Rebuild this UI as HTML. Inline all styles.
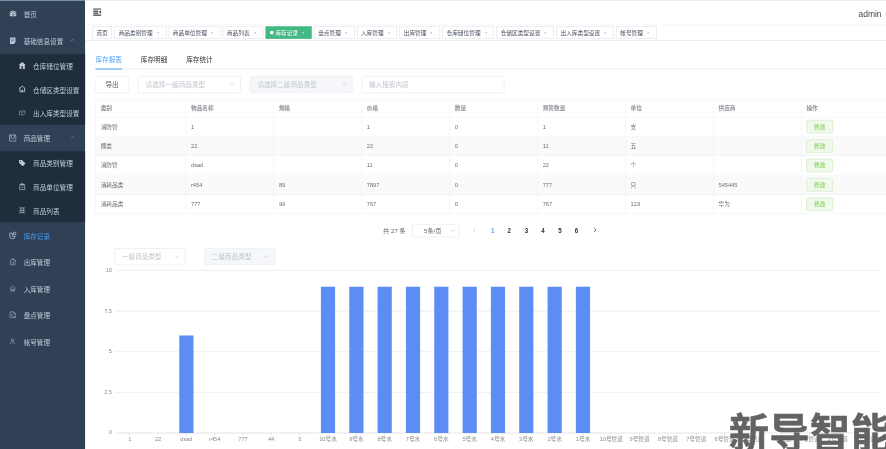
<!DOCTYPE html>
<html lang="zh-CN">
<head>
<meta charset="utf-8">
<title>库存记录</title>
<style>
*{box-sizing:border-box;}
html,body{margin:0;padding:0;width:886px;height:449px;overflow:hidden;background:#fff;}
body{font-family:"Liberation Sans","Noto Sans CJK SC",sans-serif;color:#303133;-webkit-font-smoothing:antialiased;}
#stage{filter:blur(0.7px);position:absolute;left:0;top:0;width:1920px;height:960px;transform:scale(0.4727);transform-origin:0 0;overflow:hidden;background:#fff;}
#topstrip{position:absolute;left:0;top:0;width:1920px;height:2px;background:rgba(215,216,218,.42);z-index:50;}
/* ---------- sidebar ---------- */
#side{position:absolute;left:0;top:2px;width:180px;height:960px;background:#304156;font-size:14px;color:#bfcbd9;}
#side .it{position:relative;height:56px;line-height:56px;padding-left:20px;white-space:nowrap;}
#side .sub{background:#1f2d3d;}
#side .sub .it{height:50px;line-height:50px;padding-left:40px;}
#side .ic{display:inline-block;width:14px;height:14px;margin-right:16px;vertical-align:-2px;}
#side .ic svg{display:block;width:16px;height:16px;margin:-1px;}
#side .arr{position:absolute;right:20px;top:50%;width:12px;height:12px;margin-top:-7px;}
#side .arr svg{display:block;}
#side .act{color:#4798f0;}
#side b{font-weight:normal;position:relative;top:2px;}
/* ---------- navbar ---------- */
#nav{position:absolute;left:180px;top:2px;width:1740px;height:50px;background:#fff;box-shadow:0 1px 4px rgba(0,21,41,.05);}
#ham{position:absolute;left:14.5px;top:12.5px;width:21px;height:21px;}
#user{position:absolute;left:1636px;top:0;height:50px;line-height:58px;font-size:18px;color:#4a4a4a;}
/* ---------- tags ---------- */
#tags{position:absolute;left:180px;top:52px;width:1740px;height:34px;background:#fff;border-bottom:1px solid #d8dce5;box-shadow:0 1px 3px 0 rgba(0,0,0,.12),0 0 3px 0 rgba(0,0,0,.04);white-space:nowrap;font-size:0;}
#tags .tg{display:inline-block;height:26px;line-height:24px;border:1px solid #d8dce5;color:#495060;background:#fff;padding:0 8px;font-size:12px;margin-left:5px;margin-top:4px;vertical-align:top;}
#tags .tg:first-child{margin-left:15px;}
#tags .tg.on{background:#42b983;color:#fff;border-color:#42b983;}
#tags .tg.on:before{content:"";display:inline-block;width:8px;height:8px;border-radius:50%;background:#fff;margin-right:4px;position:relative;top:0px;}
#tags .x{display:inline-block;width:16px;height:16px;margin-left:3.5px;text-align:center;line-height:16px;font-size:7px;vertical-align:1px;color:#8d939f;}
#tags .tg.on .x{color:#fff;}
/* ---------- main ---------- */
#main{position:absolute;left:180px;top:86px;width:1740px;height:874px;}
#tabs{position:absolute;left:22px;top:20px;width:1703px;height:41px;border-bottom:2px solid #e8ebf0;font-size:14px;line-height:40px;color:#303133;}
#tabs span{position:absolute;top:0;white-space:nowrap;}
#tabs .bar{position:absolute;left:0;bottom:-2px;width:56px;height:2px;background:#409EFF;}
.btn{position:absolute;border:1px solid #DCDFE6;border-radius:4px;background:#fff;color:#606266;text-align:center;}
.inp{position:absolute;border:1px solid #DCDFE6;border-radius:4px;background:#fff;color:#C0C4CC;font-size:14px;padding-left:15px;white-space:nowrap;}
.inp.dis{background:#F5F7FA;border-color:#E4E7ED;}
.inp i{position:absolute;right:11px;top:50%;width:12px;height:12px;margin-top:-6px;}
.inp i svg{display:block;}
/* table */
#tbl{position:absolute;left:20px;top:125px;width:1703px;height:243px;border-top:1px solid #EBEEF5;border-left:1px solid #EBEEF5;font-size:12px;color:#6c6e73;}
#tbl .r{position:absolute;left:0;height:41px;border-bottom:1px solid #EBEEF5;}
#tbl .r.h{height:36px;color:#909399;font-weight:bold;}
#tbl .r.s{background:#FAFAFA;}
#tbl .c{position:absolute;top:0;height:100%;border-right:1px solid #EBEEF5;padding-left:10px;line-height:40px;white-space:nowrap;}
#tbl .r.h .c{line-height:35px;}
.mod{display:inline-block;width:56px;height:28px;line-height:26px;border:1px solid #c2e7b0;border-radius:3px;background:#f0f9eb;color:#74c94a;text-align:center;font-size:12px;vertical-align:middle;margin-top:-2px;}
/* pagination */
#pg{position:absolute;left:0;top:387.5px;width:1740px;height:28px;font-size:13px;color:#606266;line-height:28px;}
#pg span{position:absolute;top:0;white-space:nowrap;}
#pg .n{width:30px;text-align:center;font-weight:bold;color:#303133;transform:scaleY(1.18);transform-origin:50% 55%;}
#pg .n.on{color:#5aa9fa;}
/* chart */
#chart{position:absolute;left:0;top:0;}
#wm{position:absolute;left:1542px;top:858px;font-family:"Noto Sans CJK SC",sans-serif;font-weight:700;font-size:82px;line-height:100px;color:#585858;opacity:.93;white-space:nowrap;letter-spacing:1.4px;z-index:40;transform:scale(1.03,1.06);transform-origin:0 0;-webkit-text-stroke:1.2px #585858;}
</style>
</head>
<body>
<div id="stage">
<div id="topstrip"></div><div style="position:absolute;left:0;top:0;width:180px;height:2.200px;background:#788ba4;z-index:51"></div>

<!-- SIDEBAR -->
<div id="side">
  <div class="it"><span class="ic"><svg viewBox="0 0 128 100" style="width:15px;height:15px;margin:-2.500px -.5px 0"><path fill="#bfcbd9" fill-rule="evenodd" d="M27.429 63.638c0-2.508-.893-4.65-2.679-6.424-1.786-1.775-3.94-2.662-6.464-2.662-2.524 0-4.679.887-6.465 2.662-1.785 1.774-2.678 3.916-2.678 6.424 0 2.508.893 4.65 2.678 6.424 1.786 1.775 3.94 2.662 6.465 2.662 2.524 0 4.678-.887 6.464-2.662 1.786-1.775 2.679-3.916 2.679-6.424zm13.714-31.801c0-2.508-.893-4.65-2.679-6.424-1.785-1.775-3.94-2.662-6.464-2.662-2.524 0-4.679.887-6.464 2.662-1.786 1.774-2.679 3.916-2.679 6.424 0 2.508.893 4.65 2.679 6.424 1.785 1.774 3.94 2.662 6.464 2.662 2.524 0 4.679-.888 6.464-2.662 1.786-1.775 2.679-3.916 2.679-6.424zM71.714 65.98l7.215-27.116c.285-1.23.107-2.378-.536-3.443-.643-1.064-1.56-1.762-2.75-2.094-1.19-.33-2.333-.177-3.429.462-1.095.639-1.81 1.573-2.143 2.804l-7.214 27.116c-2.857.237-5.405 1.266-7.643 3.088-2.238 1.822-3.738 4.152-4.5 6.992-.952 3.644-.476 7.098 1.429 10.364 1.905 3.265 4.69 5.37 8.357 6.317 3.667.947 7.143.474 10.429-1.420 3.285-1.892 5.404-4.66 6.357-8.305.762-2.84.619-5.607-.429-8.305-1.047-2.697-2.762-4.85-5.143-6.46zm47.143-2.342c0-2.508-.893-4.65-2.678-6.424-1.786-1.775-3.94-2.662-6.465-2.662-2.524 0-4.678.887-6.464 2.662-1.786 1.774-2.679 3.916-2.679 6.424 0 2.508.893 4.65 2.679 6.424 1.786 1.775 3.94 2.662 6.464 2.662 2.524 0 4.679-.887 6.465-2.662 1.785-1.775 2.678-3.916 2.678-6.424zm-45.714-45.43c0-2.509-.893-4.65-2.679-6.425C68.680 10.010 66.524 9.122 64 9.122c-2.524 0-4.679.887-6.464 2.661-1.786 1.775-2.679 3.916-2.679 6.425 0 2.508.893 4.65 2.679 6.424 1.785 1.774 3.94 2.662 6.464 2.662 2.524 0 4.679-.888 6.464-2.662 1.786-1.775 2.679-3.916 2.679-6.424zm32 13.629c0-2.508-.893-4.65-2.679-6.424-1.785-1.775-3.94-2.662-6.464-2.662-2.524 0-4.679.887-6.464 2.662-1.786 1.774-2.679 3.916-2.679 6.424 0 2.508.893 4.65 2.679 6.424 1.785 1.774 3.94 2.662 6.464 2.662 2.524 0 4.679-.888 6.464-2.662 1.786-1.775 2.679-3.916 2.679-6.424zM128 63.638c0 12.351-3.357 23.78-10.071 34.286-.905 1.372-2.190 2.058-3.858 2.058H13.930c-1.667 0-2.953-.686-3.858-2.058C3.357 87.465 0 76.037 0 63.638c0-8.613 1.690-16.847 5.071-24.703C8.452 31.080 13 24.312 18.714 18.634c5.715-5.680 12.524-10.199 20.429-13.559C47.048 1.715 55.333.035 64 .035c8.667 0 16.952 1.680 24.857 5.040 7.905 3.360 14.714 7.880 20.429 13.559 5.714 5.678 10.262 12.446 13.643 20.301 3.380 7.856 5.071 16.090 5.071 24.703z"/></svg></span><b>首页</b></div>
  <div class="it"><span class="ic"><svg viewBox="0 0 14 14"><path fill="#bfcbd9" d="M2 1h10v8.500L9 13H2z"/><path stroke="#304156" stroke-width=".9" d="M4 4h6M4 6.500h6M4 9h3"/></svg></span><b>基础信息设置</b><span class="arr"><svg width="12" height="12" viewBox="0 0 12 12"><path d="M2 8l4-4 4 4" fill="none" stroke="#8391a3" stroke-width="1.200"/></svg></span></div>
  <div class="sub">
    <div class="it"><span class="ic"><svg viewBox="0 0 14 14"><path fill="#bfcbd9" d="M7 .3L.8 5.400h1.400V13.300h9.600V5.400h1.400z"/><path fill="#1f2d3d" d="M5.600 8.200h2.800v5.100H5.600z"/></svg></span><b>仓库储位管理</b></div>
    <div class="it"><span class="ic"><svg viewBox="0 0 14 14" style="margin-top:-2px"><path fill="none" stroke="#bfcbd9" stroke-width="1.600" d="M1 6.800L7 1.800l6 5M2.800 6v6.500h8.400V6"/><path fill="#bfcbd9" d="M5.600 8.500h2.800v4H5.600z"/></svg></span><b>仓储区类型设置</b></div>
    <div class="it"><span class="ic"><svg viewBox="0 0 14 14" opacity=".8"><path fill="none" stroke="#bfcbd9" stroke-width="1.100" d="M2 3.500h10v4.500L9.500 10.500H2z"/><path stroke="#bfcbd9" stroke-width="1" d="M6 5.500v3M8 5.500v2"/></svg></span><b>出入库类型设置</b></div>
  </div>
  <div class="it"><span class="ic"><svg viewBox="0 0 14 14" style="margin-top:-1.500px"><path fill="none" stroke="#bfcbd9" stroke-width="1.300" d="M1.200 1.200h11.600v11.600H1.200zM4 1.500v3.500c0 4 6 4 6 0V1.500"/></svg></span><b>商品管理</b><span class="arr"><svg width="12" height="12" viewBox="0 0 12 12"><path d="M2 8l4-4 4 4" fill="none" stroke="#8391a3" stroke-width="1.200"/></svg></span></div>
  <div class="sub">
    <div class="it"><span class="ic"><svg viewBox="0 0 14 14"><path fill="#bfcbd9" d="M1 1.500h5.500l6.500 6.500-5 5-7-6.500z"/><circle cx="3.800" cy="4.200" r="1" fill="#1f2d3d"/></svg></span><b>商品类别管理</b></div>
    <div class="it"><span class="ic"><svg viewBox="0 0 14 14"><path fill="none" stroke="#bfcbd9" stroke-width="1.200" d="M2.500 3h9v9.500h-9zM5 1.500h4V4H5zM5 8l1.500 1.500L9.500 6.500"/></svg></span><b>商品单位管理</b></div>
    <div class="it"><span class="ic"><svg viewBox="0 0 14 14"><path fill="none" stroke="#bfcbd9" stroke-width="1.100" d="M1.500 2.500h11M1.500 7h11M1.500 11.500h11M4.500 2v10M9 2v10"/></svg></span><b>商品列表</b></div>
  </div>
  <div class="it act"><span class="ic"><svg viewBox="0 0 14 14"><path fill="none" stroke="#bfcbd9" stroke-width="1.300" d="M6 2.800H1.500V8a5 5 0 0 0 10 .8H6zM8.200 1h4.600v4.800H8.200z"/></svg></span><b>库存记录</b></div>
  <div class="it"><span class="ic"><svg viewBox="0 0 14 14" opacity=".85"><path fill="none" stroke="#bfcbd9" stroke-width="1.100" d="M1.500 6.500L7 2l5.500 4.500M2.800 6v6.500h8.400V6M4.500 2.800L7 .8l5.500 4M5.800 9l2.400-1.400v3.600"/></svg></span><b>出库管理</b></div>
  <div class="it"><span class="ic"><svg viewBox="0 0 14 14" opacity=".8"><path fill="none" stroke="#bfcbd9" stroke-width="1.100" d="M1.500 7L7 2.500 12.500 7M3.500 6.500V12h7V6.500M5.500 12V9h3v3"/></svg></span><b>入库管理</b></div>
  <div class="it"><span class="ic"><svg viewBox="0 0 14 14" opacity=".8"><path fill="none" stroke="#bfcbd9" stroke-width="1.100" d="M2 1.500h7L12.500 5v7.500H2zM9 1.500V5h3.500M5 5v4h4M7.500 10.500l1.500 1.500 2.500-3"/></svg></span><b>盘点管理</b></div>
  <div class="it"><span class="ic"><svg viewBox="0 0 14 14" opacity=".85"><circle cx="6.500" cy="4.800" r="2.300" fill="none" stroke="#bfcbd9" stroke-width="1.100"/><path fill="none" stroke="#bfcbd9" stroke-width="1.100" d="M2.500 12c.6-2.600 2-4 4-4s3.400 1.400 4 4"/></svg></span><b>帐号管理</b></div>
</div>

<!-- NAVBAR -->
<div id="nav">
  <svg id="ham" viewBox="0 0 1024 1024"><g transform="rotate(180 512 512)" fill="#111" stroke="#111" stroke-width="22"><path d="M408 442h480c4.400 0 8-3.600 8-8v-56c0-4.400-3.600-8-8-8H408c-4.400 0-8 3.600-8 8v56c0 4.400 3.600 8 8 8zm-8 204c0 4.400 3.600 8 8 8h480c4.400 0 8-3.600 8-8v-56c0-4.400-3.600-8-8-8H408c-4.400 0-8 3.600-8 8v56zm504-486H120c-4.400 0-8 3.600-8 8v56c0 4.400 3.600 8 8 8h784c4.400 0 8-3.600 8-8v-56c0-4.400-3.600-8-8-8zm0 632H120c-4.400 0-8 3.600-8 8v56c0 4.400 3.600 8 8 8h784c4.400 0 8-3.600 8-8v-56c0-4.400-3.600-8-8-8zM142.400 642.100L298.700 519a8.840 8.840 0 0 0 0-13.900L142.400 381.900c-5.800-4.600-14.400-.5-14.400 6.900v246.300a8.900 8.900 0 0 0 14.400 7z"/></g></svg>
  <div id="user">admin</div>
</div>

<!-- TAGS -->
<div id="tags"><span class="tg">首页</span><span class="tg">商品类别管理<span class="x">✕</span></span><span class="tg">商品单位管理<span class="x">✕</span></span><span class="tg">商品列表<span class="x">✕</span></span><span class="tg on">库存记录<span class="x">✕</span></span><span class="tg">盘点管理<span class="x">✕</span></span><span class="tg">入库管理<span class="x">✕</span></span><span class="tg">出库管理<span class="x">✕</span></span><span class="tg">仓库储位管理<span class="x">✕</span></span><span class="tg">仓储区类型设置<span class="x">✕</span></span><span class="tg">出入库类型设置<span class="x">✕</span></span><span class="tg">帐号管理<span class="x">✕</span></span></div>

<!-- MAIN -->
<div id="main">
  <div id="tabs">
    <span style="left:0;color:#4fa5fb">库存报表</span>
    <span style="left:96px">库存明细</span>
    <span style="left:192px">库存统计</span>
    <div class="bar"></div>
  </div>

  <div class="btn" style="left:22px;top:75px;width:70px;height:36px;line-height:34px;font-size:14px;">导出</div>
  <div class="inp" style="left:112px;top:75px;width:217px;height:36px;line-height:34px;">请选择一级商品类型<i><svg width="12" height="12" viewBox="0 0 12 12"><path d="M2 4l4 4 4-4" fill="none" stroke="#C0C4CC" stroke-width="1.200"/></svg></i></div>
  <div class="inp dis" style="left:348.5px;top:75px;width:217px;height:36px;line-height:34px;">请选择二级商品类型<i><svg width="12" height="12" viewBox="0 0 12 12"><path d="M2 4l4 4 4-4" fill="none" stroke="#C0C4CC" stroke-width="1.200"/></svg></i></div>
  <div class="inp" style="left:584.5px;top:75px;width:302px;height:36px;line-height:34px;">输入搜索内容</div>

  <div id="tbl" style="left:22px;width:1703px">
    <div class="r h" style="top:0;width:1703px"><div class="c" style="left:0px;width:191px">类别</div><div class="c" style="left:191px;width:186px">物品名称</div><div class="c" style="left:377px;width:186px">规格</div><div class="c" style="left:563px;width:186px">价格</div><div class="c" style="left:749px;width:186px">数量</div><div class="c" style="left:935px;width:186px">预警数量</div><div class="c" style="left:1121px;width:186px">单位</div><div class="c" style="left:1307px;width:186px">供应商</div><div class="c" style="left:1493px;width:209px">操作</div></div>
    <div class="r" style="top:36px;width:1703px"><div class="c" style="left:0px;width:191px">消防管</div><div class="c" style="left:191px;width:186px">1</div><div class="c" style="left:377px;width:186px"></div><div class="c" style="left:563px;width:186px">1</div><div class="c" style="left:749px;width:186px">0</div><div class="c" style="left:935px;width:186px">1</div><div class="c" style="left:1121px;width:186px">支</div><div class="c" style="left:1307px;width:186px"></div><div class="c" style="left:1493px;width:209px"><span class="mod">修改</span></div></div>
    <div class="r s" style="top:77px;width:1703px"><div class="c" style="left:0px;width:191px">棚类</div><div class="c" style="left:191px;width:186px">22</div><div class="c" style="left:377px;width:186px"></div><div class="c" style="left:563px;width:186px">22</div><div class="c" style="left:749px;width:186px">0</div><div class="c" style="left:935px;width:186px">11</div><div class="c" style="left:1121px;width:186px">五</div><div class="c" style="left:1307px;width:186px"></div><div class="c" style="left:1493px;width:209px"><span class="mod">修改</span></div></div>
    <div class="r" style="top:118px;width:1703px"><div class="c" style="left:0px;width:191px">消防管</div><div class="c" style="left:191px;width:186px">dsad</div><div class="c" style="left:377px;width:186px"></div><div class="c" style="left:563px;width:186px">11</div><div class="c" style="left:749px;width:186px">0</div><div class="c" style="left:935px;width:186px">22</div><div class="c" style="left:1121px;width:186px">个</div><div class="c" style="left:1307px;width:186px"></div><div class="c" style="left:1493px;width:209px"><span class="mod">修改</span></div></div>
    <div class="r s" style="top:159px;width:1703px"><div class="c" style="left:0px;width:191px">消耗品类</div><div class="c" style="left:191px;width:186px">r454</div><div class="c" style="left:377px;width:186px">89</div><div class="c" style="left:563px;width:186px">7897</div><div class="c" style="left:749px;width:186px">0</div><div class="c" style="left:935px;width:186px">777</div><div class="c" style="left:1121px;width:186px">只</div><div class="c" style="left:1307px;width:186px">545445</div><div class="c" style="left:1493px;width:209px"><span class="mod">修改</span></div></div>
    <div class="r" style="top:200px;width:1703px"><div class="c" style="left:0px;width:191px">消耗品类</div><div class="c" style="left:191px;width:186px">777</div><div class="c" style="left:377px;width:186px">99</div><div class="c" style="left:563px;width:186px">767</div><div class="c" style="left:749px;width:186px">0</div><div class="c" style="left:935px;width:186px">767</div><div class="c" style="left:1121px;width:186px">123</div><div class="c" style="left:1307px;width:186px">华为</div><div class="c" style="left:1493px;width:209px"><span class="mod">修改</span></div></div>
    </div>

  <div id="pg">
    <span style="left:630.5px">共 27 条</span>
    <div class="inp" style="left:692px;top:0;width:100px;height:28px;line-height:26px;font-size:13px;color:#606266;padding-left:12px;text-align:center;padding-right:25px;border-radius:3px;">5条/页<i style="right:7px"><svg width="12" height="12" viewBox="0 0 12 12"><path d="M2 4l4 4 4-4" fill="none" stroke="#C0C4CC" stroke-width="1.200"/></svg></i></div>
    <span class="n" style="left:809px;color:#C0C4CC;font-weight:normal"><svg width="12" height="12" viewBox="0 0 12 12" style="vertical-align:-1px"><path d="M7.500 2L3.500 6l4 4" fill="none" stroke="#C0C4CC" stroke-width="1.300"/></svg></span>
    <span class="n on" style="left:847.5px">1</span>
    <span class="n" style="left:882.5px">2</span>
    <span class="n" style="left:918.5px">3</span>
    <span class="n" style="left:953.5px">4</span>
    <span class="n" style="left:989.5px">5</span>
    <span class="n" style="left:1024.5px">6</span>
    <span class="n" style="left:1062.5px"><svg width="12" height="12" viewBox="0 0 12 12" style="vertical-align:-1px"><path d="M4.500 2l4 4-4 4" fill="none" stroke="#303133" stroke-width="1.300"/></svg></span>
  </div>

  <div class="inp" style="left:62px;top:439px;width:150px;height:36px;line-height:34px;">一级商品类型<i><svg width="12" height="12" viewBox="0 0 12 12"><path d="M2 4l4 4 4-4" fill="none" stroke="#C0C4CC" stroke-width="1.200"/></svg></i></div>
  <div class="inp dis" style="left:252px;top:439px;width:150px;height:36px;line-height:34px;">二级商品类型<i><svg width="12" height="12" viewBox="0 0 12 12"><path d="M2 4l4 4 4-4" fill="none" stroke="#C0C4CC" stroke-width="1.200"/></svg></i></div>
</div>

<!-- CHART (stage coordinates) -->
<svg id="chart" width="1920" height="960" viewBox="0 0 1920 960" font-family='"Liberation Sans","Noto Sans CJK SC",sans-serif' font-size="12">
<g>
<line x1="244.5" y1="916.0" x2="1862.5" y2="916.0" stroke="#c8c8c8" stroke-width="1"/>
<text x="237" y="919.0" text-anchor="end" fill="#8c8c8c">0</text>
<line x1="244.5" y1="830.0" x2="1862.5" y2="830.0" stroke="#dcdcdc" stroke-width="1"/>
<text x="237" y="833.0" text-anchor="end" fill="#8c8c8c">2.5</text>
<line x1="244.5" y1="744.1" x2="1862.5" y2="744.1" stroke="#dcdcdc" stroke-width="1"/>
<text x="237" y="747.1" text-anchor="end" fill="#8c8c8c">5</text>
<line x1="244.5" y1="658.2" x2="1862.5" y2="658.2" stroke="#dcdcdc" stroke-width="1"/>
<text x="237" y="661.2" text-anchor="end" fill="#8c8c8c">7.5</text>
<line x1="244.5" y1="572.2" x2="1862.5" y2="572.2" stroke="#dcdcdc" stroke-width="1"/>
<text x="237" y="575.2" text-anchor="end" fill="#8c8c8c">10</text>
<line x1="274.5" y1="916.0" x2="274.5" y2="920.0" stroke="#c8c8c8" stroke-width="1"/>
<text x="274.5" y="932.5" text-anchor="middle" fill="#8c8c8c">1</text>
<line x1="334.4" y1="916.0" x2="334.4" y2="920.0" stroke="#c8c8c8" stroke-width="1"/>
<text x="334.4" y="932.5" text-anchor="middle" fill="#8c8c8c">22</text>
<rect x="379.3" y="709.7" width="30.0" height="206.3" fill="#5B8DF4"/>
<line x1="394.3" y1="916.0" x2="394.3" y2="920.0" stroke="#c8c8c8" stroke-width="1"/>
<text x="394.3" y="932.5" text-anchor="middle" fill="#8c8c8c">dsad</text>
<line x1="454.2" y1="916.0" x2="454.2" y2="920.0" stroke="#c8c8c8" stroke-width="1"/>
<text x="454.2" y="932.5" text-anchor="middle" fill="#8c8c8c">r454</text>
<line x1="514.2" y1="916.0" x2="514.2" y2="920.0" stroke="#c8c8c8" stroke-width="1"/>
<text x="514.2" y="932.5" text-anchor="middle" fill="#8c8c8c">777</text>
<line x1="574.1" y1="916.0" x2="574.1" y2="920.0" stroke="#c8c8c8" stroke-width="1"/>
<text x="574.1" y="932.5" text-anchor="middle" fill="#8c8c8c">44</text>
<line x1="634.0" y1="916.0" x2="634.0" y2="920.0" stroke="#c8c8c8" stroke-width="1"/>
<text x="634.0" y="932.5" text-anchor="middle" fill="#8c8c8c">3</text>
<rect x="678.9" y="606.6" width="30.0" height="309.4" fill="#5B8DF4"/>
<line x1="693.9" y1="916.0" x2="693.9" y2="920.0" stroke="#c8c8c8" stroke-width="1"/>
<text x="693.9" y="932.5" text-anchor="middle" fill="#8c8c8c">10号水</text>
<rect x="738.9" y="606.6" width="30.0" height="309.4" fill="#5B8DF4"/>
<line x1="753.9" y1="916.0" x2="753.9" y2="920.0" stroke="#c8c8c8" stroke-width="1"/>
<text x="753.9" y="932.5" text-anchor="middle" fill="#8c8c8c">9号水</text>
<rect x="798.8" y="606.6" width="30.0" height="309.4" fill="#5B8DF4"/>
<line x1="813.8" y1="916.0" x2="813.8" y2="920.0" stroke="#c8c8c8" stroke-width="1"/>
<text x="813.8" y="932.5" text-anchor="middle" fill="#8c8c8c">8号水</text>
<rect x="858.7" y="606.6" width="30.0" height="309.4" fill="#5B8DF4"/>
<line x1="873.7" y1="916.0" x2="873.7" y2="920.0" stroke="#c8c8c8" stroke-width="1"/>
<text x="873.7" y="932.5" text-anchor="middle" fill="#8c8c8c">7号水</text>
<rect x="918.6" y="606.6" width="30.0" height="309.4" fill="#5B8DF4"/>
<line x1="933.6" y1="916.0" x2="933.6" y2="920.0" stroke="#c8c8c8" stroke-width="1"/>
<text x="933.6" y="932.5" text-anchor="middle" fill="#8c8c8c">6号水</text>
<rect x="978.6" y="606.6" width="30.0" height="309.4" fill="#5B8DF4"/>
<line x1="993.6" y1="916.0" x2="993.6" y2="920.0" stroke="#c8c8c8" stroke-width="1"/>
<text x="993.6" y="932.5" text-anchor="middle" fill="#8c8c8c">5号水</text>
<rect x="1038.5" y="606.6" width="30.0" height="309.4" fill="#5B8DF4"/>
<line x1="1053.5" y1="916.0" x2="1053.5" y2="920.0" stroke="#c8c8c8" stroke-width="1"/>
<text x="1053.5" y="932.5" text-anchor="middle" fill="#8c8c8c">4号水</text>
<rect x="1098.4" y="606.6" width="30.0" height="309.4" fill="#5B8DF4"/>
<line x1="1113.4" y1="916.0" x2="1113.4" y2="920.0" stroke="#c8c8c8" stroke-width="1"/>
<text x="1113.4" y="932.5" text-anchor="middle" fill="#8c8c8c">3号水</text>
<rect x="1158.4" y="606.6" width="30.0" height="309.4" fill="#5B8DF4"/>
<line x1="1173.4" y1="916.0" x2="1173.4" y2="920.0" stroke="#c8c8c8" stroke-width="1"/>
<text x="1173.4" y="932.5" text-anchor="middle" fill="#8c8c8c">2号水</text>
<rect x="1218.3" y="606.6" width="30.0" height="309.4" fill="#5B8DF4"/>
<line x1="1233.3" y1="916.0" x2="1233.3" y2="920.0" stroke="#c8c8c8" stroke-width="1"/>
<text x="1233.3" y="932.5" text-anchor="middle" fill="#8c8c8c">1号水</text>
<line x1="1293.2" y1="916.0" x2="1293.2" y2="920.0" stroke="#c8c8c8" stroke-width="1"/>
<text x="1293.2" y="932.5" text-anchor="middle" fill="#8c8c8c">10号管道</text>
<line x1="1353.1" y1="916.0" x2="1353.1" y2="920.0" stroke="#c8c8c8" stroke-width="1"/>
<text x="1353.1" y="932.5" text-anchor="middle" fill="#8c8c8c">9号管道</text>
<line x1="1413.1" y1="916.0" x2="1413.1" y2="920.0" stroke="#c8c8c8" stroke-width="1"/>
<text x="1413.1" y="932.5" text-anchor="middle" fill="#8c8c8c">8号管道</text>
<line x1="1473.0" y1="916.0" x2="1473.0" y2="920.0" stroke="#c8c8c8" stroke-width="1"/>
<text x="1473.0" y="932.5" text-anchor="middle" fill="#8c8c8c">7号管道</text>
<line x1="1532.9" y1="916.0" x2="1532.9" y2="920.0" stroke="#c8c8c8" stroke-width="1"/>
<text x="1532.9" y="932.5" text-anchor="middle" fill="#8c8c8c">6号管道</text>
<line x1="1592.8" y1="916.0" x2="1592.8" y2="920.0" stroke="#c8c8c8" stroke-width="1"/>
<text x="1592.8" y="932.5" text-anchor="middle" fill="#8c8c8c">5号管道</text>
<line x1="1652.8" y1="916.0" x2="1652.8" y2="920.0" stroke="#c8c8c8" stroke-width="1"/>
<text x="1652.8" y="932.5" text-anchor="middle" fill="#8c8c8c">4号管道</text>
<line x1="1712.7" y1="916.0" x2="1712.7" y2="920.0" stroke="#c8c8c8" stroke-width="1"/>
<text x="1712.7" y="932.5" text-anchor="middle" fill="#8c8c8c">3号管道</text>
<line x1="1772.6" y1="916.0" x2="1772.6" y2="920.0" stroke="#c8c8c8" stroke-width="1"/>
<text x="1772.6" y="932.5" text-anchor="middle" fill="#8c8c8c">2号管道</text>
<line x1="1832.5" y1="916.0" x2="1832.5" y2="920.0" stroke="#c8c8c8" stroke-width="1"/>
<text x="1832.5" y="932.5" text-anchor="middle" fill="#8c8c8c">1号管道</text>
</g>
</svg>

<div id="wm">新导智能</div>
</div>
</body>
</html>
